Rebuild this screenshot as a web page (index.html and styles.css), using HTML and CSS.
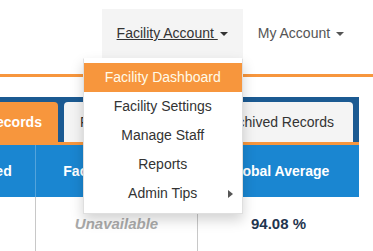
FILE: index.html
```html
<!DOCTYPE html>
<html lang="en">

<head>
  <meta charset="UTF-8">
  <meta name="viewport" content="width=device-width, initial-scale=1.0">
  <title>Facility Dashboard</title>

  <link rel="stylesheet" href="styles.css">
</head>

<body>
  <header class="topbar">
    <nav class="account-nav">
      <div class="nav-item">
        <a class="nav-link active" href="javascript:">Facility Account <span class="caret"></span></a>
        <ul class="dropdown">
          <li><a class="current" href="javascript:">Facility Dashboard</a></li>
          <li><a href="javascript:">Facility Settings</a></li>
          <li><a href="javascript:">Manage Staff</a></li>
          <li><a href="javascript:">Reports</a></li>
          <li>
            <a class="submenu" href="javascript:">
              <span></span>
              <span>Admin Tips</span>
              <span class="caret-right"></span>
            </a>
          </li>
        </ul>
      </div>
      <div class="nav-item">
        <a class="nav-link" href="javascript:">My Account <span class="caret"></span></a>
      </div>
    </nav>
  </header>

  <section class="records">
    <div class="tabs">
      <a class="tab active" href="javascript:">Active Records</a>
      <a class="tab" href="javascript:">Facility Averages</a>
      <a class="tab" href="javascript:">Archived Records</a>
    </div>
    <div class="grid">
      <div class="cell head">Submitted</div>
      <div class="cell head">Facility Average</div>
      <div class="cell head">Global Average</div>

      <div class="cell"></div>
      <div class="cell muted">Unavailable</div>
      <div class="cell value">94.08 %</div>
    </div>
  </section>
</body>

</html>
```

FILE: styles.css
```css
* {
  padding: 0;
  margin: 0;
  list-style: none;
  box-sizing: border-box;
}

body {
  font-family: "Liberation Sans", Arial, sans-serif;
  font-size: 14px;
  color: #333;
  background: #fff;
  overflow: hidden;
}

a {
  text-decoration: none;
  color: inherit;
}

/* top navigation */
.topbar {
  display: flex;
  justify-content: flex-end;
  padding: 9px 14px 16px 0;
  border-bottom: 3px solid #f7963d;
}

.account-nav {
  display: flex;
}

.nav-item {
  position: relative;
}

.nav-link {
  display: block;
  padding: 15px;
  line-height: 19px;
  color: #555;
}

.nav-link.active {
  background-color: #f4f4f4;
  color: #333;
  text-decoration: underline;
}

.caret {
  display: inline-block;
  width: 0;
  height: 0;
  margin-left: 2px;
  vertical-align: middle;
  border-top: 4px solid;
  border-left: 4px solid transparent;
  border-right: 4px solid transparent;
}

.dropdown {
  position: absolute;
  top: 100%;
  right: 0;
  width: 160px;
  padding: 4px 0 5px;
  background-color: #fff;
  border: 1px solid rgba(0, 0, 0, 0.12);
  border-top-color: #fff;
  box-shadow: 0 6px 12px rgba(0, 0, 0, 0.175);
  z-index: 10;
}

.dropdown a {
  display: block;
  height: 29px;
  line-height: 29px;
  text-align: center;
  color: #333;
}

.dropdown a.current {
  background-color: #f7963d;
  color: #fffbe8;
}

.dropdown a.submenu {
  display: grid;
  grid-template-columns: 1fr auto 1fr;
  align-items: center;
}

.caret-right {
  justify-self: end;
  margin-right: 9px;
  width: 0;
  height: 0;
  border-left: 5px solid #555;
  border-top: 4px solid transparent;
  border-bottom: 4px solid transparent;
}

/* records panel */
.records {
  width: 439px;
  margin: 20px 0 0 -80px;
}

.tabs {
  display: flex;
  gap: 6px;
  padding: 5px 6px 0 4px;
  background-color: #1b5a92;
  border-bottom: 3px solid #f7963d;
}

.tab {
  height: 40px;
  line-height: 40px;
  padding: 0 16px;
  border-radius: 4px 4px 0 0;
  background-color: #f4f4f4;
  color: #333;
  white-space: nowrap;
}

.tab.active {
  background-color: #f7963d;
  color: #fff;
  font-weight: bold;
}

.tab:last-child {
  padding-right: 19px;
}

.grid {
  display: grid;
  grid-template-columns: 115px 162px 162px;
}

.cell {
  text-align: center;
  padding: 18px 6px;
  line-height: 18px;
  font-size: 15px;
  font-weight: bold;
  border-left: 1px solid #c8c8c8;
  min-height: 60px;
}

.cell:nth-child(3n+1) {
  border-left: none;
}

.cell.head {
  background-color: #1a86d1;
  color: #fff;
  font-size: 14px;
  height: 52px;
  min-height: 0;
  padding: 17px 6px;
  border-left-color: rgba(255, 255, 255, 0.25);
}

.cell.muted {
  color: #aaa;
  font-style: italic;
}

.cell.value {
  color: #1f3550;
}
```
